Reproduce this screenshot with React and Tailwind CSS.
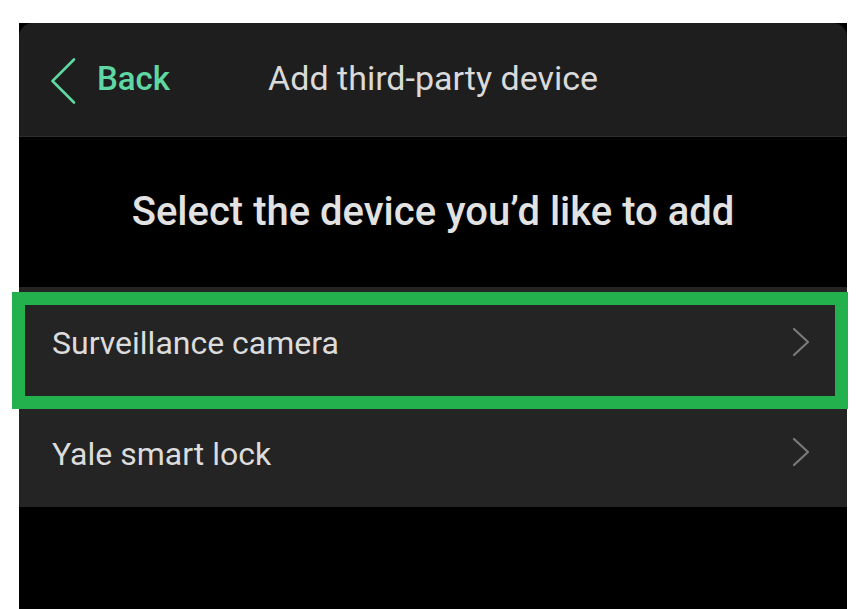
export default function App() {
  const rows = ["Surveillance camera", "Yale smart lock"];
  return (
    <div className="w-[862px] h-[609px] bg-white pt-[23px] pl-[19px] overflow-hidden" style={{ fontFamily: "Roboto, 'Noto Sans', sans-serif" }}>
      <div className="relative w-[828px] h-[586px] bg-black flex flex-col">
        <div className="h-[114px] bg-[#1e1e1e] rounded-t-[14px] border-b border-[#2e2e2e] flex items-center pl-[31px] pb-[3px]">
          <svg width="26" height="46" viewBox="0 0 26 46" className="mr-[21px] mt-[6px]">
            <path d="M24 1.5 L2.5 23 L24 44.5" fill="none" stroke="#5fd7a3" strokeWidth="2.6" strokeLinecap="round" strokeLinejoin="round" />
          </svg>
          <span className="text-[33px] font-medium text-[#5fd7a3] leading-none">Back</span>
          <span className="ml-[98px] text-[34px] text-[#dadada] leading-none">Add third-party device</span>
        </div>
        <div className="h-[150px] flex items-center justify-center">
          <h1 className="text-[40px] font-medium text-[#e2e2e2] leading-none pb-[1px]">Select the device you’d like to add</h1>
        </div>
        <div className="flex flex-col">
          {rows.map((r, i) => (
            <div key={r} className={`h-[110px] bg-[#242424] flex items-center justify-between pl-[33px] pr-[37px] ${i === 0 ? "border-b border-[#111111]" : ""}`}>
              <span className="text-[32px] text-[#dcdcdc] leading-none pt-[3px]">{r}</span>
              <svg width="18" height="30" viewBox="0 0 18 30">
                <path d="M2 2 L16 15 L2 28" fill="none" stroke="#7a7a7a" strokeWidth="2.2" strokeLinecap="round" strokeLinejoin="round" />
              </svg>
            </div>
          ))}
        </div>
        <div className="absolute left-[-7px] top-[269px] w-[836px] h-[117px] border-[13px] border-[#22b14c] pointer-events-none" />
      </div>
    </div>
  );
}
